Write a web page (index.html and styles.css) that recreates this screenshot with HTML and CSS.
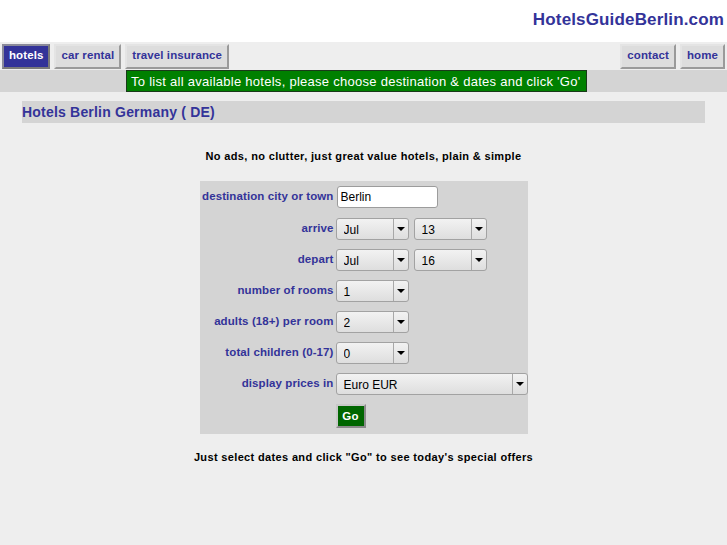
FILE: index.html
```html
<!DOCTYPE html>
<html>
<head>
<meta charset="utf-8">
<title>Hotels Berlin Germany</title>
<link rel="stylesheet" href="styles.css">
</head>
<body>
<header class="top">
  <div class="brand">HotelsGuideBerlin.com</div>
</header>
<nav class="nav">
  <div class="nav-group">
    <a class="tab tab-active" href="#">hotels</a>
    <a class="tab" href="#">car rental</a>
    <a class="tab" href="#">travel insurance</a>
  </div>
  <div class="nav-group">
    <a class="tab" href="#">contact</a>
    <a class="tab" href="#">home</a>
  </div>
</nav>
<div class="msgbar">
  <div class="msg">To list all available hotels, please choose destination &amp; dates and click 'Go'</div>
</div>
<main class="main">
  <h1 class="heading">Hotels Berlin Germany ( DE)</h1>
  <p class="tagline">No ads, no clutter, just great value hotels, plain &amp; simple</p>
  <form class="search">
    <label class="lbl">destination city or town</label>
    <div class="ctl"><input class="txt" type="text" value="Berlin"></div>

    <label class="lbl">arrive</label>
    <div class="ctl">
      <span class="sel sel-s"><select><option>Jul</option></select></span>
      <span class="sel sel-s"><select><option>13</option></select></span>
    </div>

    <label class="lbl">depart</label>
    <div class="ctl">
      <span class="sel sel-s"><select><option>Jul</option></select></span>
      <span class="sel sel-s"><select><option>16</option></select></span>
    </div>

    <label class="lbl">number of rooms</label>
    <div class="ctl"><span class="sel sel-s"><select><option>1</option></select></span></div>

    <label class="lbl">adults (18+) per room</label>
    <div class="ctl"><span class="sel sel-s"><select><option>2</option></select></span></div>

    <label class="lbl">total children (0-17)</label>
    <div class="ctl"><span class="sel sel-s"><select><option>0</option></select></span></div>

    <label class="lbl">display prices in</label>
    <div class="ctl"><span class="sel sel-l"><select><option>Euro EUR</option></select></span></div>

    <span></span>
    <div class="ctl"><button class="go" type="button">Go</button></div>
  </form>
  <p class="tagline bottom">Just select dates and click "Go" to see today's special offers</p>
</main>
</body>
</html>
```

FILE: styles.css
```css
html, body {
  margin: 0;
  padding: 0;
}
body {
  background: #eeeeee;
  font-family: "Liberation Sans", Arial, sans-serif;
  min-height: 545px;
}
.top {
  background: #ffffff;
  height: 42px;
  box-sizing: border-box;
  padding: 10px 3px 0 0;
  text-align: right;
}
.brand {
  font-size: 17px;
  line-height: 20px;
  font-weight: bold;
  letter-spacing: 0.15px;
  color: #333399;
}
.nav {
  display: flex;
  justify-content: space-between;
  height: 28px;
  box-sizing: border-box;
  padding: 2px 2px 0 2px;
  background: #eeeeee;
}
.nav-group {
  display: flex;
  gap: 4px;
}
.tab {
  display: block;
  height: 25px;
  box-sizing: border-box;
  padding: 1px 5px 0 5px;
  line-height: 16px;
  font-size: 11.5px;
  font-weight: bold;
  letter-spacing: 0.1px;
  color: #333399;
  text-decoration: none;
  background: #dddddd;
  border: 2px solid;
  border-color: #e4e4e4 #9a9a9a #9a9a9a #e4e4e4;
}
.tab-active {
  background: #333399;
  color: #ffffff;
  border-color: #8a8a9a #7a7a7a #7a7a7a #8a8a9a;
}
.msgbar {
  background: #d4d4d4;
  height: 22px;
  padding-left: 126px;
}
.msg {
  width: 461px;
  height: 22px;
  box-sizing: border-box;
  background: #008000;
  border: 1px solid #1a3a1a;
  color: #ffffff;
  font-size: 13px;
  letter-spacing: 0.27px;
  line-height: 21px;
  padding-left: 4px;
  white-space: nowrap;
}
.main {
  padding-top: 9px;
}
.heading {
  margin: 0 22px;
  height: 22px;
  background: #d4d4d4;
  color: #333399;
  font-size: 14px;
  letter-spacing: 0.2px;
  line-height: 22px;
  font-weight: bold;
}
.tagline {
  margin: 26px 0 0 0;
  text-align: center;
  font-size: 11px;
  line-height: 14px;
  font-weight: bold;
  letter-spacing: 0.35px;
  color: #000000;
}
.tagline.bottom {
  margin-top: 16px;
}
.search {
  width: 328px;
  box-sizing: border-box;
  margin: 18px auto 0 auto;
  background: #d4d4d4;
  padding: 5px 0 6px 2px;
  display: grid;
  grid-template-columns: 132px 1fr;
  column-gap: 2px;
  row-gap: 9px;
  align-items: center;
}
.lbl {
  text-align: right;
  font-size: 11.5px;
  font-weight: bold;
  letter-spacing: 0.1px;
  color: #333399;
  white-space: nowrap;
  padding-bottom: 3px;
}
.ctl {
  display: flex;
  gap: 5px;
  align-items: center;
}
.txt {
  width: 101px;
  height: 22px;
  box-sizing: border-box;
  margin: 0 0 1px 1px;
  border: 1px solid #9c9c9c;
  border-radius: 3px;
  background: #ffffff;
  font-family: "Liberation Sans", Arial, sans-serif;
  font-size: 12px;
  padding: 0 3px;
  color: #000000;
}
.sel {
  position: relative;
  display: block;
  height: 22px;
}
.sel-s { width: 73px; }
.sel-l { width: 192px; }
.sel select {
  -webkit-appearance: none;
  appearance: none;
  width: 100%;
  height: 22px;
  box-sizing: border-box;
  margin: 0;
  border: 1px solid #a2a2a2;
  border-radius: 3px;
  background: linear-gradient(#f2f2f2, #dedede);
  font-family: "Liberation Sans", Arial, sans-serif;
  font-size: 12px;
  color: #000000;
  padding: 1px 0 0 7px;
  line-height: 20px;
}
.sel::before {
  content: "";
  position: absolute;
  top: 1px;
  bottom: 1px;
  right: 15px;
  width: 1px;
  background: #a8a8a8;
}
.sel::after {
  content: "";
  position: absolute;
  top: 9px;
  right: 4px;
  width: 0;
  height: 0;
  border-left: 4px solid transparent;
  border-right: 4px solid transparent;
  border-top: 4px solid #000000;
}
.go {
  width: 30px;
  height: 24px;
  margin-left: 0;
  box-sizing: border-box;
  padding: 0;
  background: #006600;
  color: #ffffff;
  font-family: "Liberation Sans", Arial, sans-serif;
  font-size: 11.5px;
  font-weight: bold;
  letter-spacing: 0.2px;
  border: 2px solid;
  border-color: #c8c8c8 #8a8a8a #8a8a8a #c8c8c8;
}
```
